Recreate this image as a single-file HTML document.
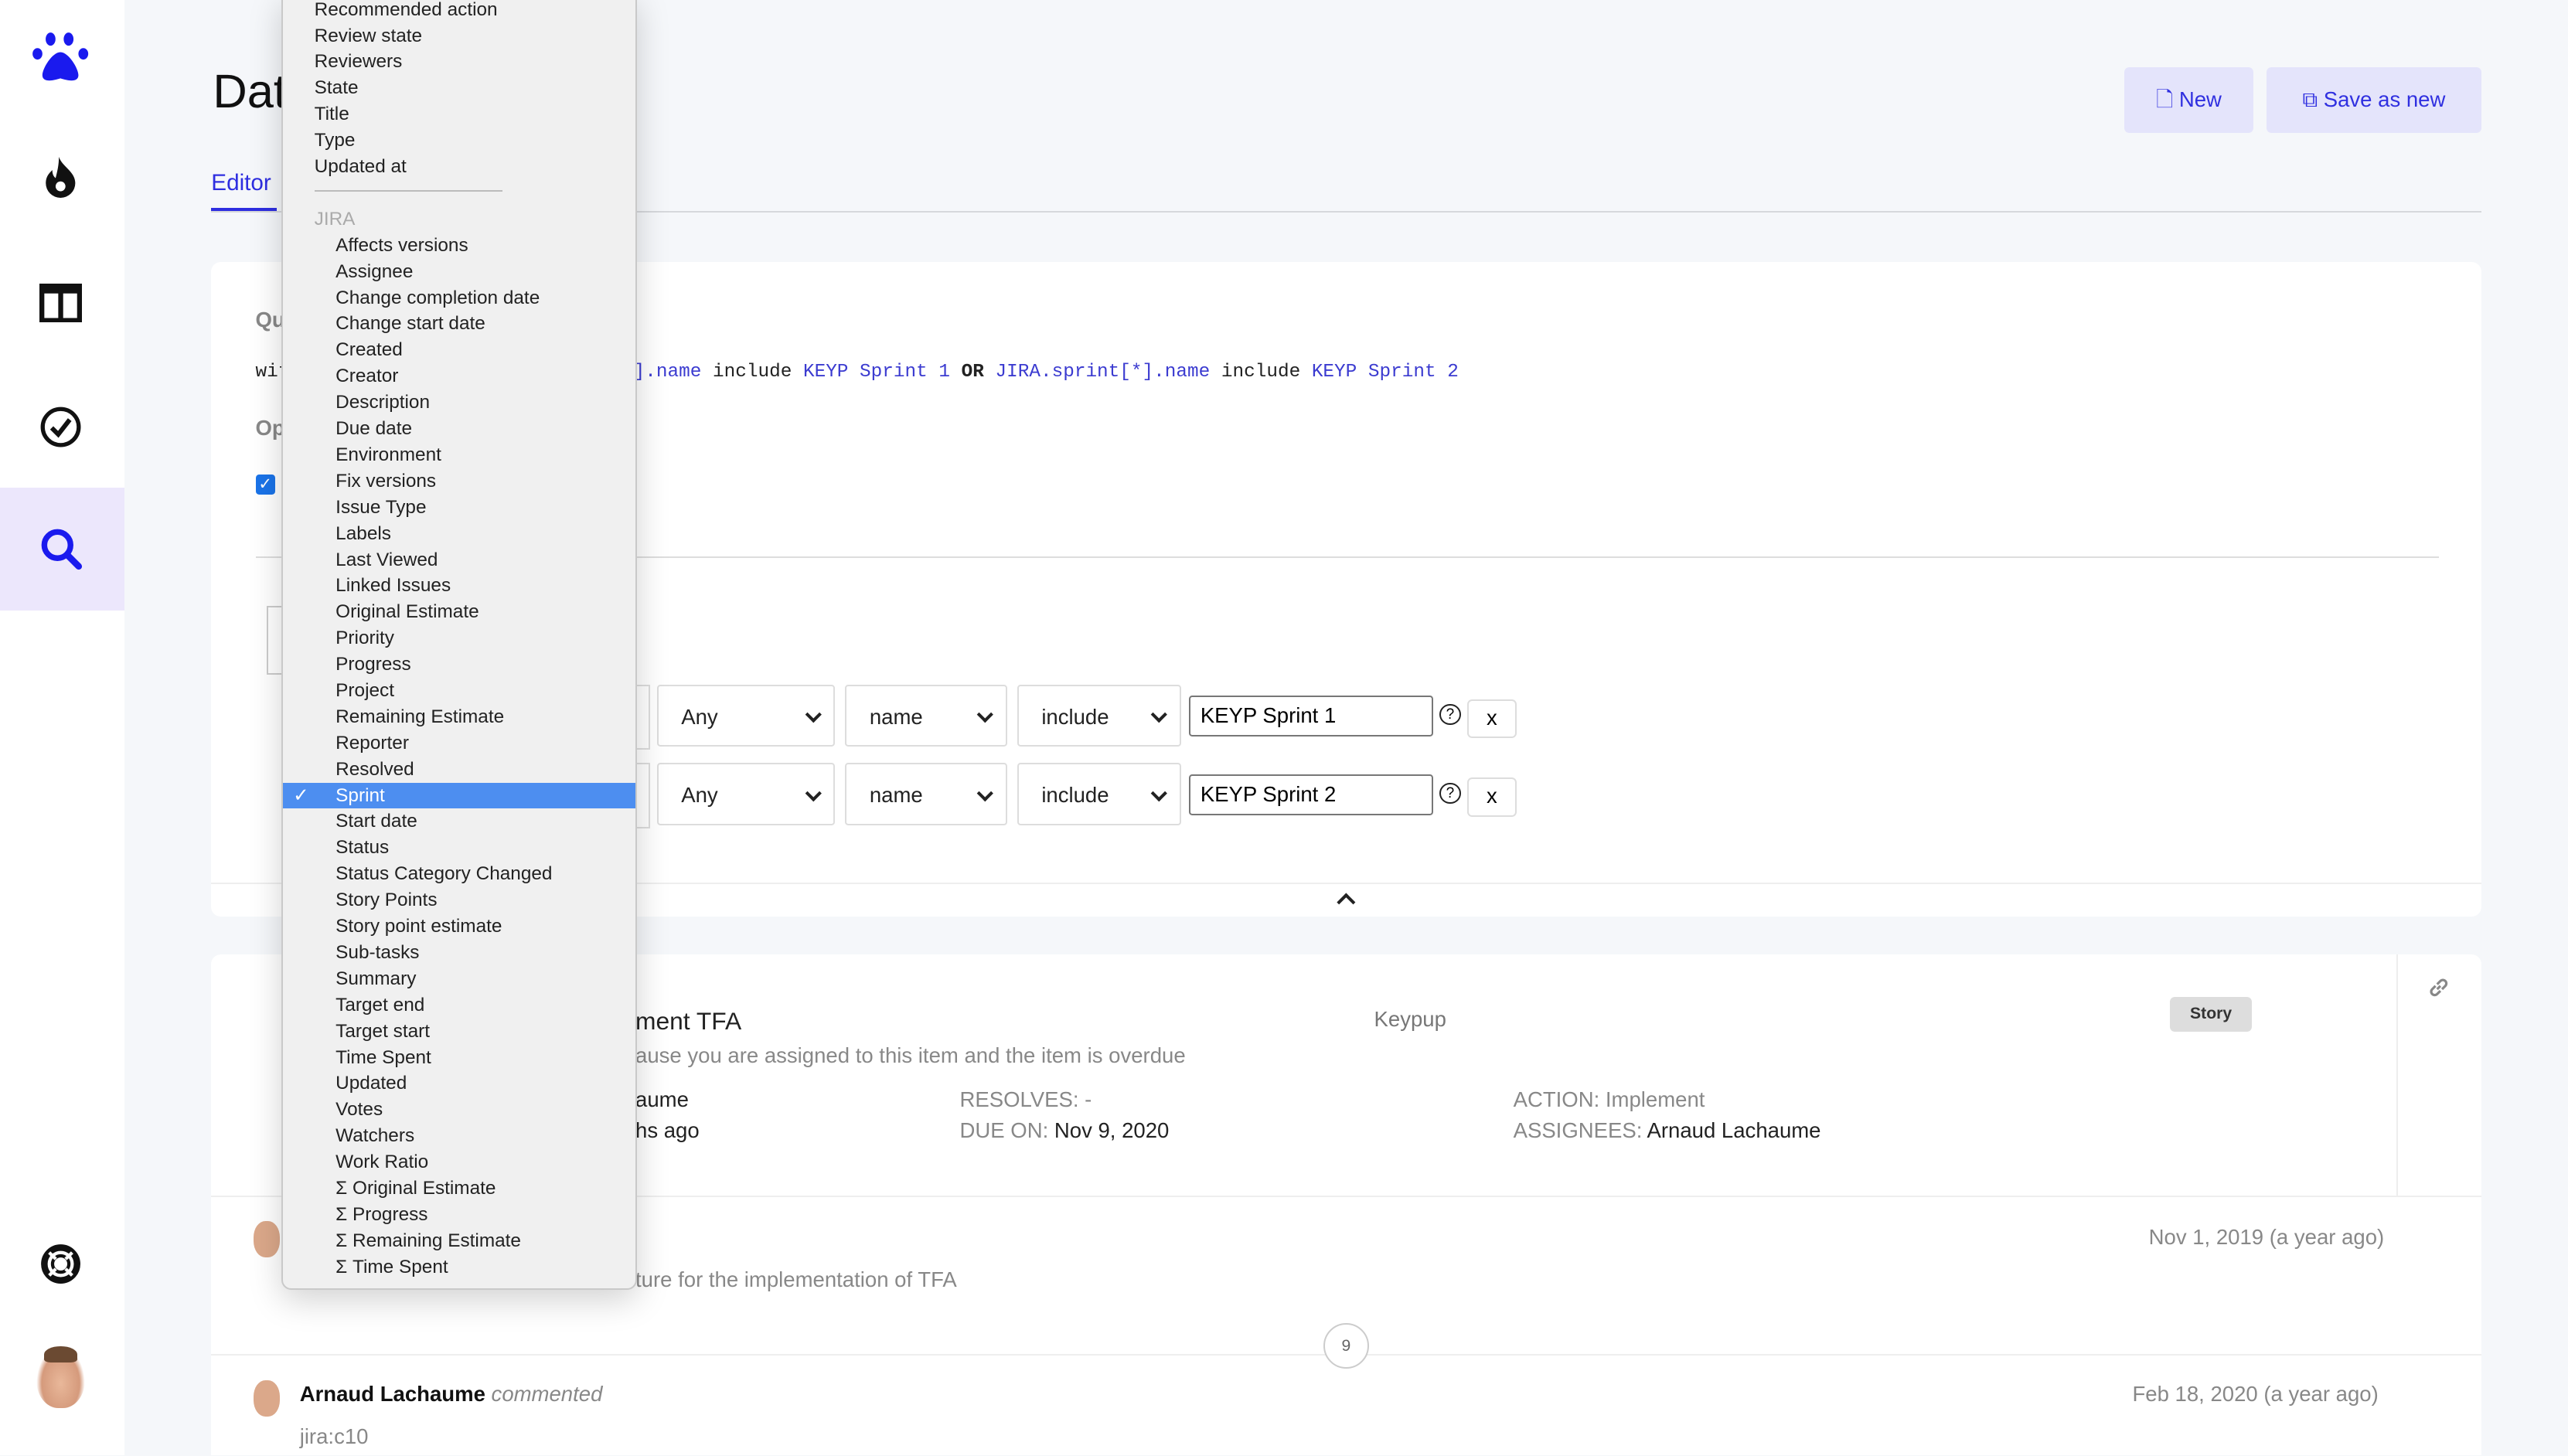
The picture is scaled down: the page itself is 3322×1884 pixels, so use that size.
<!DOCTYPE html>
<html><head><meta charset="utf-8"><style>
html,body{margin:0;padding:0;}
body{width:3322px;height:1884px;overflow:hidden;background:#f5f7fa;font-family:"Liberation Sans",sans-serif;}
#r{position:absolute;left:0;top:0;width:1568px;height:889px;zoom:2.11862;}
.a{position:absolute;white-space:nowrap;}
.side{position:absolute;left:0;top:0;width:76px;height:889px;background:#fff;}
.btn{position:absolute;top:41px;height:40px;background:#e4e4fb;border-radius:3px;color:#3030e0;font-size:13px;line-height:40px;text-align:center;}
.card{position:absolute;background:#fff;border-radius:6px;}
.sel{position:absolute;height:38px;border:1px solid #ddd;border-radius:2px;background:#fff;font-size:13px;color:#222;line-height:38px;box-sizing:border-box;padding-left:14px;}
.sel:after{content:"";position:absolute;right:9px;top:14px;width:5px;height:5px;border-right:2px solid #222;border-bottom:2px solid #222;transform:rotate(45deg);}
.inp{position:absolute;height:25px;border:1px solid #777;border-radius:2px;font-size:13px;line-height:23px;padding-left:6px;box-sizing:border-box;background:#fff;}
.dd{position:absolute;left:172px;top:-4px;width:215px;height:790px;background:#f0f0f0;border:1px solid #c9c9c9;border-radius:0 0 6px 6px;box-shadow:0 6px 20px rgba(0,0,0,.18);font-size:11.5px;color:#222;}
.dd div{position:absolute;height:16px;line-height:16px;white-space:nowrap;}
.g{left:19px}.j{left:32px}
.gray{color:#888}
.mono{font-family:"Liberation Mono",monospace;font-size:11.5px;}
.bl{color:#3b3bd0}
</style></head><body><div id="r">
<div class="side"></div>
<div class="a" style="left:0;top:298px;width:76px;height:75px;background:#ece7fc"></div>
<svg class="a" style="left:19px;top:19px" width="36" height="32" viewBox="0 0 36 32"><g fill="#1a1aee"><ellipse cx="12" cy="5" rx="3" ry="4"/><ellipse cx="23" cy="5" rx="3" ry="4"/><ellipse cx="4" cy="14" rx="3" ry="3.5"/><ellipse cx="32" cy="14" rx="3" ry="3.5"/><path d="M18 13c-5 0-11 10-11 14 0 4 5 4 11 2 6 2 11 2 11-2 0-4-6-14-11-14z"/></g></svg>
<svg class="a" style="left:26px;top:96px" width="22" height="26" viewBox="0 0 22 26"><path d="M10 0c2 6 10 9 10 16a9 9 0 0 1-18 0c0-4 2-6 4-8 0 3 1 4 2 5 1-4 2-8 2-13z" fill="#111"/><circle cx="11" cy="18" r="3" fill="#fff"/></svg>
<svg class="a" style="left:24px;top:173px" width="26" height="24" viewBox="0 0 26 24"><rect x="1.5" y="1.5" width="23" height="21" fill="none" stroke="#111" stroke-width="3"/><rect x="1" y="1" width="24" height="5" fill="#111"/><rect x="11.5" y="2" width="3" height="20" fill="#111"/></svg>
<svg class="a" style="left:24px;top:248px" width="26" height="26" viewBox="0 0 26 26"><circle cx="13" cy="13" r="11" fill="none" stroke="#111" stroke-width="2.5"/><path d="M7.5 13.5l4 4 7-9" fill="none" stroke="#111" stroke-width="2.8"/></svg>
<svg class="a" style="left:24px;top:322px" width="28" height="28" viewBox="0 0 28 28"><circle cx="11" cy="11" r="8" fill="none" stroke="#1a1aee" stroke-width="3.5"/><path d="M17 17l7 7" stroke="#1a1aee" stroke-width="4" stroke-linecap="round"/></svg>
<svg class="a" style="left:24px;top:759px" width="26" height="26" viewBox="0 0 26 26"><circle cx="13" cy="13" r="10" fill="none" stroke="#111" stroke-width="4"/><circle cx="13" cy="13" r="5" fill="none" stroke="#111" stroke-width="2"/><path d="M6 6l4 4M20 6l-4 4M6 20l4-4M20 20l-4-4" stroke="#fff" stroke-width="2"/></svg>
<div class="a" style="left:22px;top:822px;width:30px;height:38px;border-radius:45%;background:radial-gradient(ellipse at 50% 60%,#e9b89a 0,#d59a7c 55%,#fff 70%)"><div style="position:absolute;left:5px;top:0;width:20px;height:10px;background:#6b4a32;border-radius:50% 50% 20% 20%"></div></div>

<div class="a" style="left:130px;top:39px;font-size:29px;color:#111">Dat</div>
<div class="btn" style="left:1297px;width:79px">🗋 New</div>
<div class="btn" style="left:1384px;width:131px">⧉ Save as new</div>
<div class="a" style="left:129px;top:104px;font-size:14px;color:#2e2ee0">Editor</div>
<div class="a" style="left:129px;top:127px;width:40px;height:3px;background:#2e2ee0"></div>
<div class="a" style="left:129px;top:129px;width:1386px;height:1px;background:#d6d8dc"></div>

<div class="card" style="left:129px;top:160px;width:1386px;height:400px"></div>
<div class="a" style="left:156px;top:188px;font-size:13px;font-weight:bold;color:#888">Qu</div>
<div class="a mono" style="left:156px;top:221px;color:#222">wit</div>
<div class="a mono" style="left:380px;top:221px;color:#222"><span class="bl">*].name</span> include <span class="bl">KEYP Sprint 1</span> <b>OR</b> <span class="bl">JIRA.sprint[*].name</span> include <span class="bl">KEYP Sprint 2</span></div>
<div class="a" style="left:156px;top:254px;font-size:13px;font-weight:bold;color:#888">Op</div>
<div class="a" style="left:156px;top:290px;width:12px;height:12px;background:#1a73e8;border-radius:2px;color:#fff;font-size:10px;line-height:12px;text-align:center">✓</div>
<div class="a" style="left:156px;top:340px;width:1333px;height:1px;background:#ddd"></div>
<div class="a" style="left:163px;top:370px;width:12px;height:40px;border:1px solid #ccc;border-right:none"></div>
<div class="a" style="left:380px;top:418px;width:16px;height:38px;border:1px solid #ddd;border-left:none"></div>
<div class="a" style="left:380px;top:466px;width:16px;height:38px;border:1px solid #ddd;border-left:none"></div>
<div class="sel" style="left:401px;top:418px;width:109px">Any</div>
<div class="sel" style="left:516px;top:418px;width:99px">name</div>
<div class="sel" style="left:621px;top:418px;width:100px">include</div>
<div class="inp" style="left:726px;top:425px;width:149px">KEYP Sprint 1</div>
<div class="sel" style="left:401px;top:466px;width:109px">Any</div>
<div class="sel" style="left:516px;top:466px;width:99px">name</div>
<div class="sel" style="left:621px;top:466px;width:100px">include</div>
<div class="inp" style="left:726px;top:473px;width:149px">KEYP Sprint 2</div>
<div class="a" style="left:879px;top:430px;width:11px;height:11px;border:1.3px solid #222;border-radius:50%;font-size:9px;line-height:11px;text-align:center">?</div>
<div class="a" style="left:879px;top:478px;width:11px;height:11px;border:1.3px solid #222;border-radius:50%;font-size:9px;line-height:11px;text-align:center">?</div>
<div class="a" style="left:896px;top:427px;width:28px;height:22px;border:1px solid #ddd;border-radius:3px;font-size:13px;line-height:21px;text-align:center">x</div>
<div class="a" style="left:896px;top:475px;width:28px;height:22px;border:1px solid #ddd;border-radius:3px;font-size:13px;line-height:21px;text-align:center">x</div>
<div class="a" style="left:129px;top:539px;width:1386px;height:1px;background:#eee"></div>
<div class="a" style="left:818px;top:547px;width:6px;height:6px;border-left:2px solid #222;border-top:2px solid #222;transform:rotate(45deg)"></div>

<div class="card" style="left:129px;top:583px;width:1386px;height:306px;border-radius:6px 6px 0 0"></div>
<div class="a" style="left:1463px;top:583px;width:1px;height:147px;background:#eee"></div>
<div class="a" style="left:388px;top:615px;font-size:15px;color:#222">ment TFA</div>
<div class="a" style="left:388px;top:637px;font-size:13px;color:#888">ause you are assigned to this item and the item is overdue</div>
<div class="a" style="left:839px;top:615px;font-size:13px;color:#777">Keypup</div>
<div class="a" style="left:1325px;top:609px;width:50px;height:21px;background:#ddd;border-radius:3px;font-size:10px;font-weight:bold;line-height:21px;text-align:center;color:#333">Story</div>
<svg class="a" style="left:1482px;top:596px" width="14" height="14" viewBox="0 0 14 14"><path d="M6 8l2-2M5 6L3 8a2 2 0 0 0 3 3l2-2M9 8l2-2a2 2 0 0 0-3-3L6 5" fill="none" stroke="#888" stroke-width="1.5"/></svg>
<div class="a" style="left:388px;top:664px;font-size:13px;color:#222">aume</div>
<div class="a" style="left:388px;top:683px;font-size:13px;color:#222">hs ago</div>
<div class="a" style="left:586px;top:664px;font-size:13px;color:#888">RESOLVES: -</div>
<div class="a" style="left:586px;top:683px;font-size:13px;color:#888">DUE ON: <span style="color:#222">Nov 9, 2020</span></div>
<div class="a" style="left:924px;top:664px;font-size:13px;color:#888">ACTION: Implement</div>
<div class="a" style="left:924px;top:683px;font-size:13px;color:#888">ASSIGNEES: <span style="color:#222">Arnaud Lachaume</span></div>
<div class="a" style="left:129px;top:730px;width:1386px;height:1px;background:#eee"></div>
<div class="a" style="left:155px;top:746px;width:16px;height:22px;border-radius:45%;background:#dba88a"></div>
<div class="a" style="left:1312px;top:748px;font-size:13px;color:#888">Nov 1, 2019 (a year ago)</div>
<div class="a" style="left:388px;top:774px;font-size:13px;color:#888">ture for the implementation of TFA</div>
<div class="a" style="left:129px;top:827px;width:1386px;height:1px;background:#eee"></div>
<div class="a" style="left:808px;top:808px;width:26px;height:26px;border:1px solid #ccc;border-radius:50%;background:#fff;font-size:10px;line-height:26px;text-align:center;color:#666">9</div>
<div class="a" style="left:155px;top:843px;width:16px;height:22px;border-radius:45%;background:#dba88a"></div>
<div class="a" style="left:183px;top:844px;font-size:13px;color:#111"><b>Arnaud Lachaume</b> <i style="color:#888">commented</i></div>
<div class="a" style="left:1302px;top:844px;font-size:13px;color:#888">Feb 18, 2020 (a year ago)</div>
<div class="a" style="left:183px;top:870px;font-size:13px;color:#888">jira:c10</div>

<div class="dd">
<div class="g" style="top:1px">Recommended action</div>
<div class="g" style="top:17px">Review state</div>
<div class="g" style="top:33px">Reviewers</div>
<div class="g" style="top:49px">State</div>
<div class="g" style="top:65px">Title</div>
<div class="g" style="top:81px">Type</div>
<div class="g" style="top:97px">Updated at</div>
<div style="left:19px;top:119px;width:115px;height:1px;background:#bbb"></div>
<div class="g gray" style="top:129px;color:#aaa">JIRA</div>
<div class="j" style="top:145px">Affects versions</div>
<div class="j" style="top:161px">Assignee</div>
<div class="j" style="top:177px">Change completion date</div>
<div class="j" style="top:193px">Change start date</div>
<div class="j" style="top:209px">Created</div>
<div class="j" style="top:225px">Creator</div>
<div class="j" style="top:241px">Description</div>
<div class="j" style="top:257px">Due date</div>
<div class="j" style="top:273px">Environment</div>
<div class="j" style="top:289px">Fix versions</div>
<div class="j" style="top:305px">Issue Type</div>
<div class="j" style="top:321px">Labels</div>
<div class="j" style="top:337px">Last Viewed</div>
<div class="j" style="top:353px">Linked Issues</div>
<div class="j" style="top:369px">Original Estimate</div>
<div class="j" style="top:385px">Priority</div>
<div class="j" style="top:401px">Progress</div>
<div class="j" style="top:417px">Project</div>
<div class="j" style="top:433px">Remaining Estimate</div>
<div class="j" style="top:449px">Reporter</div>
<div class="j" style="top:465px">Resolved</div>
<div style="left:0;top:481px;width:215px;background:#4d8ef0;color:#fff"><span style="position:absolute;left:6px">✓</span><span style="position:absolute;left:32px">Sprint</span></div>
<div class="j" style="top:497px">Start date</div>
<div class="j" style="top:513px">Status</div>
<div class="j" style="top:529px">Status Category Changed</div>
<div class="j" style="top:545px">Story Points</div>
<div class="j" style="top:561px">Story point estimate</div>
<div class="j" style="top:577px">Sub-tasks</div>
<div class="j" style="top:593px">Summary</div>
<div class="j" style="top:609px">Target end</div>
<div class="j" style="top:625px">Target start</div>
<div class="j" style="top:641px">Time Spent</div>
<div class="j" style="top:657px">Updated</div>
<div class="j" style="top:673px">Votes</div>
<div class="j" style="top:689px">Watchers</div>
<div class="j" style="top:705px">Work Ratio</div>
<div class="j" style="top:721px">Σ Original Estimate</div>
<div class="j" style="top:737px">Σ Progress</div>
<div class="j" style="top:753px">Σ Remaining Estimate</div>
<div class="j" style="top:769px">Σ Time Spent</div>
</div>
</div></body></html>
